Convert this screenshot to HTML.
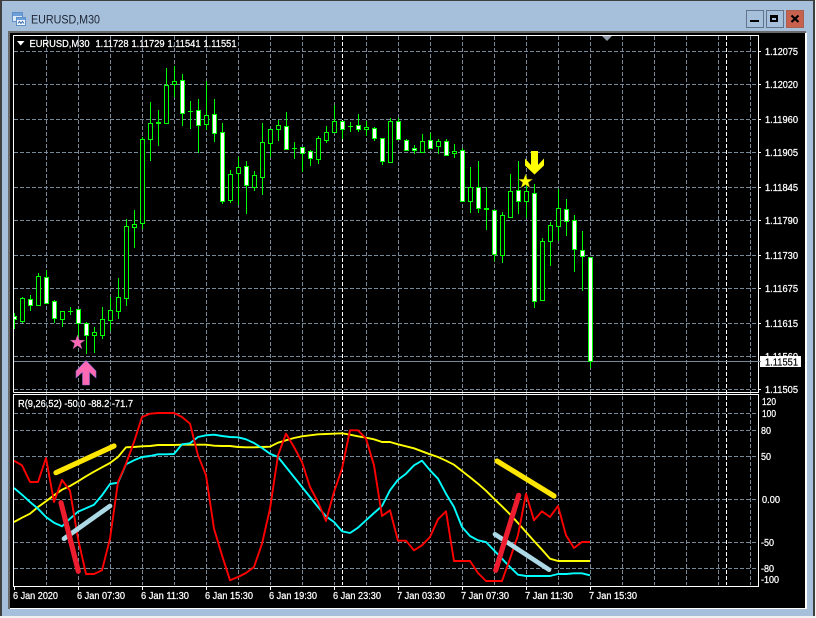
<!DOCTYPE html>
<html><head><meta charset="utf-8"><style>
html,body{margin:0;padding:0;background:#f0f0f0;width:816px;height:618px;overflow:hidden}
svg{display:block;font-family:"Liberation Sans",sans-serif}
</style></head><body>
<svg width="816" height="618" viewBox="0 0 816 618" xmlns="http://www.w3.org/2000/svg">
<rect x="0" y="0" width="816" height="618" fill="#f2f2f2"/>
<rect x="0" y="0" width="815" height="616" fill="#3f3f3f"/>
<rect x="2" y="1" width="811" height="615" fill="#a6bfdb"/>
<rect x="8" y="31" width="798" height="578" fill="#6a6a6a"/>
<rect x="10" y="33" width="797" height="576" fill="#fff"/>
<rect x="10" y="33" width="795" height="575" fill="#000"/>
<g shape-rendering="crispEdges">
<rect x="12.500" y="12.500" width="10" height="9" fill="#dce9f7" stroke="#5d8fc9"/>
<rect x="13" y="13" width="9" height="3" fill="#6f9fd8"/>
<rect x="16.500" y="17.500" width="9" height="8" fill="#f4f8fc" stroke="#5d8fc9"/>
<rect x="17" y="18" width="8" height="2" fill="#6f9fd8"/>
</g>
<path d="M18 23.500l1.500-2 1.500 2 1.500-2 1.500 2" fill="none" stroke="#3b6ea8" stroke-width="1"/>
<text x="31" y="23.500" font-size="12" fill="#1d2433" textLength="69" lengthAdjust="spacingAndGlyphs">EURUSD,M30</text>
<g shape-rendering="crispEdges">
<rect x="746.500" y="10.500" width="17" height="17" fill="#a6bfdb" stroke="#62748c"/>
<rect x="750" y="20" width="9" height="2" fill="#000"/>
<rect x="766.500" y="10.500" width="17" height="17" fill="#a6bfdb" stroke="#62748c"/>
<rect x="770" y="15" width="8" height="7" fill="#000"/>
<rect x="772" y="18" width="4" height="2" fill="#a6bfdb"/>
<rect x="786.500" y="10.500" width="17" height="17" fill="#c9614f" stroke="#a8604f"/>
</g>
<path d="M791.500 15.500l7 6.500m0-6.500l-7 6.500" stroke="#000" stroke-width="2.200" fill="none"/>

<g shape-rendering="crispEdges" fill="none">
<path stroke="#778899" stroke-dasharray="4 2" d="M14 51.500H758M14 84.500H758M14 119.500H758M14 152.500H758M14 187.500H758M14 220.500H758M14 255.500H758M14 288.500H758M14 323.500H758M14 356.500H758M14 389.500H758M14 413.500H758M14 430.500H758M14 456.500H758M14 499.500H758M14 542.500H758M14 568.500H758"/>
<path stroke="#778899" stroke-dasharray="4 2" d="M46.500 36V585M78.500 36V585M110.500 36V585M142.500 36V585M174.500 36V585M206.500 36V585M238.500 36V585M270.500 36V585M302.500 36V585M334.500 36V585M366.500 36V585M398.500 36V585M430.500 36V585M462.500 36V585M494.500 36V585M526.500 36V585M558.500 36V585M590.500 36V585M622.500 36V585M654.500 36V585M686.500 36V585M718.500 36V585M750.500 36V585"/>
<path stroke="#fff" stroke-dasharray="4 2" d="M342.500 36V585M726.500 36V585"/>
<path stroke="#778899" d="M14 361.500H758"/>
<path stroke="#00ff00" d="M14.500 313V329M22.500 297V323M30.500 295V311M38.500 273V306M46.500 270V303M54.500 300V323M62.500 311V327M70.500 307V315M68 311.500h5M78.500 309V339M86.500 322V354M94.500 327V353M102.500 307V339M110.500 297V331M118.500 278V319M126.500 219V306M134.500 210V248M142.500 137V229M150.500 102V161M158.500 110V146M156 123.500h5M156 122.500h5M166.500 68V123M174.500 66V97M182.500 74V126M190.500 101V129M188 111.500h5M198.500 99V153M206.500 81V130M214.500 99V142M222.500 123V204M230.500 170V203M238.500 157V205M246.500 161V214M254.500 171V191M262.500 123V195M270.500 129V157M278.500 120V141M286.500 112V149M294.500 142V159M292 148.500h5M302.500 147V172M310.500 150V166M318.500 136V164M326.500 126V143M334.500 105V132M342.500 121V139M350.500 122V132M348 126.500h5M358.500 114V132M366.500 121V136M374.500 127V141M382.500 138V165M390.500 118V163M398.500 118V139M406.500 139V151M414.500 145V154M422.500 134V152M430.500 133V148M438.500 139V154M446.500 139V156M454.500 144V158M462.500 148V202M470.500 167V213M478.500 161V213M486.500 187V230M484 209.500h5M484 208.500h5M494.500 209V261M502.500 212V263M510.500 174V218M518.500 161V214M526.500 176V218M534.500 184V308M542.500 238V301M550.500 222V266M558.500 189V241M566.500 199V236M574.500 215V272M582.500 231V291M590.500 257V368"/>
<path fill="#000" stroke="#00ff00" d="M20.500 298.500h4v23h-4zM36.500 276.500h4v29h-4zM60.500 311.500h4v8h-4zM92.500 332.500h4v3h-4zM100.500 319.500h4v16h-4zM108.500 310.500h4v10h-4zM116.500 297.500h4v14h-4zM124.500 226.500h4v72h-4zM132.500 224.500h4v3h-4zM140.500 139.500h4v84h-4zM148.500 123.500h4v16h-4zM164.500 85.500h4v38h-4zM172.500 81.500h4v3h-4zM204.500 115.500h4v9h-4zM228.500 174.500h4v26h-4zM236.500 167.500h4v6h-4zM252.500 175.500h4v12h-4zM260.500 142.500h4v35h-4zM268.500 129.500h4v14h-4zM276.500 125.500h4v4h-4zM316.500 138.500h4v21h-4zM324.500 132.500h4v8h-4zM332.500 121.500h4v11h-4zM364.500 127.500h4v2h-4zM388.500 121.500h4v41h-4zM420.500 141.500h4v11h-4zM436.500 141.500h4v5h-4zM452.500 151.500h4v2h-4zM468.500 187.500h4v14h-4zM500.500 215.500h4v40h-4zM508.500 191.500h4v26h-4zM524.500 191.500h4v10h-4zM540.500 241.500h4v59h-4zM548.500 225.500h4v16h-4zM556.500 208.500h4v18h-4z"/>
<path fill="#fff" stroke="#00ff00" d="M13.500 316.500h3v3h-3zM28.500 299.500h4v6h-4zM44.500 277.500h4v26h-4zM52.500 301.500h4v17h-4zM76.500 309.500h4v14h-4zM84.500 323.500h4v12h-4zM180.500 80.500h4v33h-4zM196.500 110.500h4v15h-4zM212.500 114.500h4v19h-4zM220.500 132.500h4v69h-4zM244.500 166.500h4v19h-4zM284.500 126.500h4v23h-4zM300.500 147.500h4v6h-4zM308.500 151.500h4v7h-4zM340.500 121.500h4v8h-4zM356.500 125.500h4v4h-4zM372.500 128.500h4v10h-4zM380.500 138.500h4v23h-4zM396.500 121.500h4v18h-4zM404.500 140.500h4v10h-4zM412.500 148.500h4v2h-4zM428.500 140.500h4v8h-4zM444.500 141.500h4v14h-4zM460.500 150.500h4v51h-4zM476.500 187.500h4v21h-4zM492.500 210.500h4v44h-4zM516.500 190.500h4v11h-4zM532.500 193.500h4v108h-4zM564.500 209.500h4v12h-4zM572.500 220.500h4v29h-4zM580.500 250.500h4v6h-4zM588.500 257.500h4v104h-4z"/>
</g>

<path fill="#ff69b4" stroke="#8a6fd0" stroke-width=".6" d="M86 360.500L96 371V378L89.500 372V385H82.500V372L76 378V371Z"/>
<path fill="#ff69b4" stroke="#a05a9a" stroke-width=".5" d="M77.500 335l1.800 5.200 5.400 0-4.400 3.300 1.700 5.300-4.500-3.200-4.500 3.200 1.700-5.300-4.400-3.300 5.400 0z"/>
<path fill="#ffff00" d="M531 151H538V165L544 158.500V165.500L534.500 174.500L525 165.500V158.500L531 165Z"/>
<path fill="#ffff00" stroke="#6a5a00" stroke-width=".5" d="M525.500 174l1.800 5.200 5.400 0-4.400 3.300 1.700 5.300-4.500-3.200-4.500 3.200 1.700-5.300-4.400-3.300 5.400 0z"/>
<path fill="#8f9ba8" d="M602 36H612L607 41Z"/>

<g fill="none" stroke-linejoin="round" stroke-width="1.900">
<path stroke="#ffff00" d="M14 522L22 517.700 30 513.700 38 507 46 501.300 54 495.300 62 489.700 70 486 78 481.300 86 476.300 94 471.700 102 467.300 110 463 118 457 126 447.300 134 447 142 446.300 150 446 158 445 166 445 174 445 182 444.700 190 444.700 198 444.700 206 444.700 214 445.700 222 446 230 446 238 447 246 447.300 254 447.300 262 447 270 446.700 278 442.700 286 440.300 294 438 302 436.300 310 435.300 318 434.300 326 434 334 433.700 342 433.300 350 434.700 358 436.300 366 437.700 374 439.300 382 442 390 442 398 444.300 406 446.300 414 448.300 422 451.300 430 454.300 438 457 446 460.700 454 464.700 462 471 470 477.300 478 483.700 486 490.700 494 498.700 502 506.300 510 514.300 518 523 526 532 534 541 542 549.700 550 558.700 558 561 566 561 574 561 582 561 590 561"/>
<path stroke="#00ffff" d="M14 488L22 494.700 30 502 38 508.700 46 517 54 522.700 62 526.300 70 518.700 78 511.700 86 508.300 94 504.700 102 495.300 110 484 118 482.700 126 464.300 134 460.300 142 457 150 456 158 454.300 166 454.300 174 454 182 444.300 190 443.300 198 437 206 435.300 214 434.700 222 436 230 437 238 437.300 246 439.300 254 443 262 448 270 453.700 278 457 286 467 294 477 302 487 310 497 318 507 326 516.300 334 522 342 531.300 350 533 358 527.700 366 520.300 374 513 382 506 390 490.300 398 479.700 406 473.700 414 465.300 422 460.700 430 470.300 438 478.700 446 493.700 454 507 462 527 470 536 478 540.300 486 542 494 550.300 502 558.700 510 567 518 574.700 526 576 534 576 542 576 550 576 558 574 566 574 574 573.300 582 573.300 590 575.300"/>
<path stroke="#ff0000" d="M14 460.700L22 465.300 30 482 38 482 46 458 54 502 62 480 70 490.700 78 538.700 86 574 94 574 102 570.300 110 538.700 118 482 126 463.700 134 442 142 417 150 413.700 158 413 166 413 174 413 182 417 190 423.700 198 455.300 206 475.300 214 528.700 222 555.300 230 580.300 238 577 246 573 254 567 262 543.700 270 508.700 278 455.300 286 433.700 294 447 302 462 310 487 318 502 326 521 334 492 342 468.700 350 430.300 358 430.300 366 438.700 374 465.300 382 516 390 510.300 398 540.700 406 540.700 414 550.300 422 545.300 430 537 438 519.300 446 511.300 454 561 462 561 470 561 478 573 486 581 494 581 502 581 510 558.700 518 535.300 526 493.700 534 520.300 542 511.300 550 517 558 506 566 535.300 574 548 582 542 590 542"/>
</g>
<g fill="none" stroke-linecap="round">
<path stroke="#ffe600" stroke-width="5.200" d="M56 472.700L114 446M497 461L554 496"/>
<path stroke="#add8e6" stroke-width="4.700" d="M64 538.700L110 506M495 534.300L549 569.700"/>
<path stroke="#ed1c2e" stroke-width="5.200" d="M61 502.700L78.300 571.300M495.700 570.300L518.700 495.300"/>
</g>

<g shape-rendering="crispEdges" fill="none" stroke="#fff">
<path d="M13.500 392.500V35.500H758.500V392.500H13.500M13.500 394.500H758.500V586.500H13.500Z"/>
<path d="M758 51.500h3M758 84.500h3M758 119.500h3M758 152.500h3M758 187.500h3M758 220.500h3M758 255.500h3M758 288.500h3M758 323.500h3M758 389.500h3M14.500 586v4M78.500 586v4M142.500 586v4M206.500 586v4M270.500 586v4M334.500 586v4M398.500 586v4M462.500 586v4M526.500 586v4M590.500 586v4"/>
</g>

<path d="M17 41H24.500L20.700 45.500Z" fill="#fff"/>
<g font-size="10" fill="#fff" stroke="#fff" stroke-width=".25">
<text x="29.500" y="47" textLength="60" lengthAdjust="spacingAndGlyphs">EURUSD,M30</text>
<text x="95.500" y="47" textLength="33" lengthAdjust="spacingAndGlyphs">1.11728</text>
<text x="131.500" y="47" textLength="33" lengthAdjust="spacingAndGlyphs">1.11729</text>
<text x="167.500" y="47" textLength="33" lengthAdjust="spacingAndGlyphs">1.11541</text>
<text x="203.500" y="47" textLength="33" lengthAdjust="spacingAndGlyphs">1.11551</text>
<text x="18" y="407" textLength="115" lengthAdjust="spacingAndGlyphs">R(9,26,52) -50.0 -88.2 -71.7</text>
<text x="765" y="55" textLength="33" lengthAdjust="spacingAndGlyphs">1.12075</text>
<text x="765" y="88" textLength="33" lengthAdjust="spacingAndGlyphs">1.12020</text>
<text x="765" y="123" textLength="33" lengthAdjust="spacingAndGlyphs">1.11960</text>
<text x="765" y="156" textLength="33" lengthAdjust="spacingAndGlyphs">1.11905</text>
<text x="765" y="191" textLength="33" lengthAdjust="spacingAndGlyphs">1.11845</text>
<text x="765" y="224" textLength="33" lengthAdjust="spacingAndGlyphs">1.11790</text>
<text x="765" y="259" textLength="33" lengthAdjust="spacingAndGlyphs">1.11730</text>
<text x="765" y="292" textLength="33" lengthAdjust="spacingAndGlyphs">1.11675</text>
<text x="765" y="327" textLength="33" lengthAdjust="spacingAndGlyphs">1.11615</text>
<text x="765" y="360" textLength="33" lengthAdjust="spacingAndGlyphs">1.11560</text>
<text x="765" y="393" textLength="33" lengthAdjust="spacingAndGlyphs">1.11505</text>
<text x="762" y="405" textLength="14" lengthAdjust="spacingAndGlyphs">120</text>
<text x="762" y="417" textLength="14" lengthAdjust="spacingAndGlyphs">100</text>
<text x="761" y="434" textLength="10" lengthAdjust="spacingAndGlyphs">80</text>
<text x="761" y="460" textLength="10" lengthAdjust="spacingAndGlyphs">50</text>
<text x="762" y="503" textLength="18" lengthAdjust="spacingAndGlyphs">0.00</text>
<text x="761" y="546" textLength="13" lengthAdjust="spacingAndGlyphs">-50</text>
<text x="761" y="572" textLength="13" lengthAdjust="spacingAndGlyphs">-80</text>
<text x="761" y="583" textLength="18" lengthAdjust="spacingAndGlyphs">-100</text>
<text x="13" y="599" textLength="45" lengthAdjust="spacingAndGlyphs">6 Jan 2020</text>
<text x="77" y="599" textLength="48" lengthAdjust="spacingAndGlyphs">6 Jan 07:30</text>
<text x="141" y="599" textLength="48" lengthAdjust="spacingAndGlyphs">6 Jan 11:30</text>
<text x="205" y="599" textLength="48" lengthAdjust="spacingAndGlyphs">6 Jan 15:30</text>
<text x="269" y="599" textLength="48" lengthAdjust="spacingAndGlyphs">6 Jan 19:30</text>
<text x="333" y="599" textLength="48" lengthAdjust="spacingAndGlyphs">6 Jan 23:30</text>
<text x="397" y="599" textLength="48" lengthAdjust="spacingAndGlyphs">7 Jan 03:30</text>
<text x="461" y="599" textLength="48" lengthAdjust="spacingAndGlyphs">7 Jan 07:30</text>
<text x="525" y="599" textLength="48" lengthAdjust="spacingAndGlyphs">7 Jan 11:30</text>
<text x="589" y="599" textLength="48" lengthAdjust="spacingAndGlyphs">7 Jan 15:30</text>
</g>
<rect x="760" y="356" width="41" height="11" fill="#fff" shape-rendering="crispEdges"/>
<rect x="758" y="361" width="3" height="1" fill="#778899" shape-rendering="crispEdges"/>
<text x="765" y="365.500" font-size="10" fill="#000" stroke="#000" stroke-width=".2" textLength="33" lengthAdjust="spacingAndGlyphs">1.11551</text>
</svg>
</body></html>
